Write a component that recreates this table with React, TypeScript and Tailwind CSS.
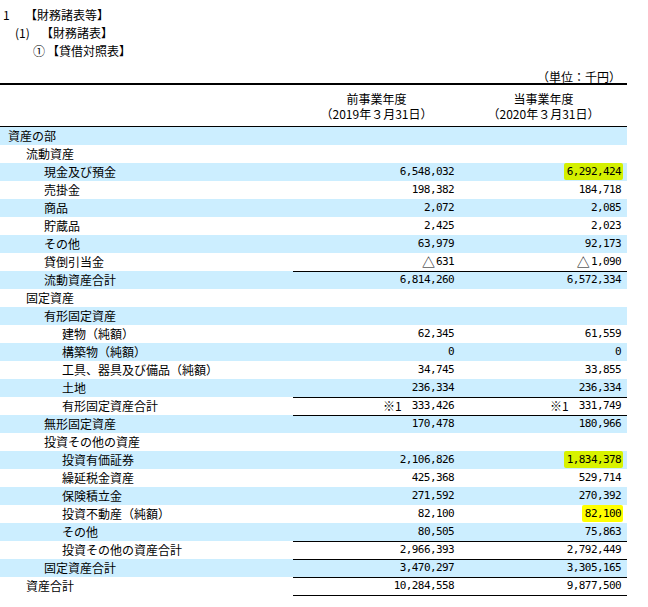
import React from "react";

type Row = {
  label: string;
  lvl: number;
  v1?: string;
  v2?: string;
  top?: boolean;
  note?: boolean;
  hl?: string;
};

const rows: Row[] = [
  { label: "資産の部", lvl: 0 },
  { label: "流動資産", lvl: 1 },
  { label: "現金及び預金", lvl: 2, v1: "6,548,032", v2: "6,292,424", hl: "bg-[#d4f000]" },
  { label: "売掛金", lvl: 2, v1: "198,382", v2: "184,718" },
  { label: "商品", lvl: 2, v1: "2,072", v2: "2,085" },
  { label: "貯蔵品", lvl: 2, v1: "2,425", v2: "2,023" },
  { label: "その他", lvl: 2, v1: "63,979", v2: "92,173" },
  { label: "貸倒引当金", lvl: 2, v1: "△631", v2: "△1,090" },
  { label: "流動資産合計", lvl: 2, v1: "6,814,260", v2: "6,572,334", top: true },
  { label: "固定資産", lvl: 1 },
  { label: "有形固定資産", lvl: 2 },
  { label: "建物（純額）", lvl: 3, v1: "62,345", v2: "61,559" },
  { label: "構築物（純額）", lvl: 3, v1: "0", v2: "0" },
  { label: "工具、器具及び備品（純額）", lvl: 3, v1: "34,745", v2: "33,855" },
  { label: "土地", lvl: 3, v1: "236,334", v2: "236,334" },
  { label: "有形固定資産合計", lvl: 3, v1: "333,426", v2: "331,749", top: true, note: true },
  { label: "無形固定資産", lvl: 2, v1: "170,478", v2: "180,966", top: true },
  { label: "投資その他の資産", lvl: 2 },
  { label: "投資有価証券", lvl: 3, v1: "2,106,826", v2: "1,834,378", hl: "bg-[#d8f200]" },
  { label: "繰延税金資産", lvl: 3, v1: "425,368", v2: "529,714" },
  { label: "保険積立金", lvl: 3, v1: "271,592", v2: "270,392" },
  { label: "投資不動産（純額）", lvl: 3, v1: "82,100", v2: "82,100", hl: "bg-[#ffff00]" },
  { label: "その他", lvl: 3, v1: "80,505", v2: "75,863" },
  { label: "投資その他の資産合計", lvl: 3, v1: "2,966,393", v2: "2,792,449", top: true },
  { label: "固定資産合計", lvl: 2, v1: "3,470,297", v2: "3,305,165", top: true },
  { label: "資産合計", lvl: 1, v1: "10,284,558", v2: "9,877,500", top: true },
];

const indent = ["pl-[8px]", "pl-[26px]", "pl-[44px]", "pl-[62px]"];

const jp = { fontFamily: '"Noto Sans CJK JP", sans-serif' };

function Num({ v, note, hl }: { v?: string; note?: boolean; hl?: string }) {
  return (
    <div className="flex h-full items-center justify-end pr-[6px]">
      {note && v ? (
        <span className="mr-auto pl-[90px] text-[12px] leading-[18px]" style={jp}>
          ※1
        </span>
      ) : null}
      {v ? (
        <span className="relative inline-flex items-center h-[18px] text-[11px] tracking-[-0.6px] leading-[18px] font-['DejaVu_Sans_Mono',monospace]">
          {hl ? (
            <span className={`absolute -left-[3px] -right-[2px] top-[0px] bottom-[1px] rounded-[2px] ${hl}`} />
          ) : null}
          {v.startsWith("△") ? (
            <span className="relative text-[13px] leading-[18px] tracking-normal mr-[1px]" style={jp}>
              △
            </span>
          ) : null}
          <span className="relative">{v.startsWith("△") ? v.slice(1) : v}</span>
        </span>
      ) : null}
    </div>
  );
}

export default function App() {
  return (
    <div className="w-[648px] h-[607px] bg-white text-black text-[12px]" style={jp}>
      <div className="pt-[6px]">
        <div className="flex h-[18px] items-center leading-[18px]">
          <span className="w-[25px] pl-[3px]">1</span>
          <span>【財務諸表等】</span>
        </div>
        <div className="flex h-[18px] items-center leading-[18px]">
          <span className="w-[41px] pl-[15px]">(1)</span>
          <span>【財務諸表】</span>
        </div>
        <div className="flex h-[18px] items-center leading-[18px]">
          <span className="w-[47px] pl-[33px]">①</span>
          <span>【貸借対照表】</span>
        </div>
      </div>
      <div className="w-[627px]">
        <div className="mt-[10px] flex h-[13px] items-center justify-end pr-[6px] leading-[13px]">
          （単位：千円）
        </div>
        <div className="grid h-[44px] grid-cols-[293px_167px_167px] border-t-2 border-b border-black">
          <div />
          <div className="flex flex-col items-center justify-center leading-[15px]">
            <span>前事業年度</span>
            <span>（2019年３月31日）</span>
          </div>
          <div className="flex flex-col items-center justify-center leading-[15px]">
            <span>当事業年度</span>
            <span>（2020年３月31日）</span>
          </div>
        </div>
        <div className="flex flex-col">
          {rows.map((r, i) => (
            <div
              key={i}
              className={`grid h-[18px] grid-cols-[293px_334px] ${i % 2 === 0 ? "bg-[#cceeff]" : "bg-white"}`}
            >
              <div className={`flex items-center whitespace-nowrap leading-[18px] ${indent[r.lvl]}`}>{r.label}</div>
              <div
                className={`grid grid-cols-[167px_167px] ${r.top ? "shadow-[inset_0_1px_0_#000]" : ""}`}
              >
                <Num v={r.v1} note={r.note} />
                <Num v={r.v2} note={r.note} hl={r.hl} />
              </div>
            </div>
          ))}
          <div className="ml-[293px] h-px w-[334px] bg-black" />
        </div>
      </div>
    </div>
  );
}
